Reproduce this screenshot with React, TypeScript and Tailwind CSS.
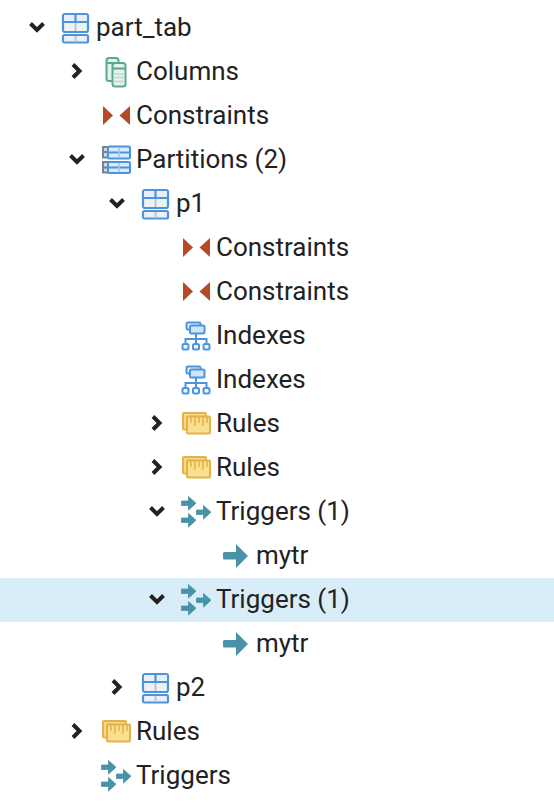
import type { ReactNode } from "react";

type IconName = "table" | "columns" | "constraints" | "partitions" | "indexes" | "rules" | "triggers" | "trigger";

type Node = {
  label: string;
  icon: IconName;
  depth: 0 | 1 | 2 | 3 | 4;
  arrow?: "open" | "closed";
  selected?: boolean;
};

const nodes: Node[] = [
  { label: "part_tab", icon: "table", depth: 0, arrow: "open" },
  { label: "Columns", icon: "columns", depth: 1, arrow: "closed" },
  { label: "Constraints", icon: "constraints", depth: 1 },
  { label: "Partitions (2)", icon: "partitions", depth: 1, arrow: "open" },
  { label: "p1", icon: "table", depth: 2, arrow: "open" },
  { label: "Constraints", icon: "constraints", depth: 3 },
  { label: "Constraints", icon: "constraints", depth: 3 },
  { label: "Indexes", icon: "indexes", depth: 3 },
  { label: "Indexes", icon: "indexes", depth: 3 },
  { label: "Rules", icon: "rules", depth: 3, arrow: "closed" },
  { label: "Rules", icon: "rules", depth: 3, arrow: "closed" },
  { label: "Triggers (1)", icon: "triggers", depth: 3, arrow: "open" },
  { label: "mytr", icon: "trigger", depth: 4 },
  { label: "Triggers (1)", icon: "triggers", depth: 3, arrow: "open", selected: true },
  { label: "mytr", icon: "trigger", depth: 4 },
  { label: "p2", icon: "table", depth: 2, arrow: "closed" },
  { label: "Rules", icon: "rules", depth: 1, arrow: "closed" },
  { label: "Triggers", icon: "triggers", depth: 1 },
];

const depthClass = ["pl-[27px]", "pl-[67px]", "pl-[107px]", "pl-[147px]", "pl-[187px]"];

const BLUE = "#4a94e0";
const TEAL = "#4a92a8";
const RUST = "#b64a24";
const GOLD = "#e3b24a";

function TableIcon() {
  return (
    <g stroke={BLUE} strokeWidth="2.2">
      <rect x="2" y="2" width="25" height="18" rx="2" fill="#eef1f3" />
      <rect x="2" y="23" width="25" height="7.5" rx="1.5" fill="#eef1f3" />
      <path d="M14.5 11V19M14.5 24V30" stroke="#c4c8cc" />
      <path d="M3 3H26V9H3Z" fill="#e6f0f8" stroke="none" />
      <path d="M2 10H27M14.5 2V10" />
    </g>
  );
}

function ColumnsIcon() {
  const green = "#5aa88e";
  return (
    <g stroke={green} strokeWidth="2" fill="#e4f2ec">
      <rect x="5.5" y="2" width="12" height="23" rx="2.5" />
      <path d="M6 7H17" />
      <rect x="11.5" y="7" width="13" height="23.5" rx="2.5" />
      <path d="M12 12.5H24" />
      <path d="M12 18H24M12 21.5H24M12 25.5H24" stroke="#b5dccb" strokeWidth="1.3" />
    </g>
  );
}

function ConstraintsIcon() {
  return (
    <g fill={RUST}>
      <path d="M2 6L12 15.5L2 25Z" />
      <path d="M29 6V25L18.5 15.5Z" />
    </g>
  );
}

function PartitionsIcon() {
  return (
    <g strokeWidth="2">
      <rect x="2" y="3" width="10" height="10.5" fill="#d4d8dc" stroke="#73849a" />
      <rect x="2" y="18" width="10" height="10.5" fill="#d4d8dc" stroke="#73849a" />
      <path d="M2 8H8M2 23.5H8" stroke="#73849a" />
      <rect x="7" y="2.5" width="22" height="12" rx="1.5" fill="#d6ebfb" stroke={BLUE} />
      <rect x="7" y="18" width="22" height="11" rx="1.5" fill="#d6ebfb" stroke={BLUE} />
      <path d="M7 8.5H29M7 23.5H29" stroke={BLUE} />
      <path d="M18 3V14M18 19V28" stroke="#b9c4cc" strokeWidth="1.5" />
    </g>
  );
}

function IndexesIcon() {
  return (
    <g stroke={BLUE} strokeWidth="2">
      <rect x="5.5" y="2.5" width="14" height="7" rx="1.5" fill="#e3eff9" />
      <rect x="9" y="5.5" width="14.5" height="8" rx="1.5" fill="#cfe5fa" />
      <path d="M15 13.5V19M4.5 24V19H25.5V24M15 19V24" fill="none" />
      <rect x="1.5" y="24" width="6" height="5.5" rx="1.5" fill="#eef5fc" />
      <rect x="12" y="24" width="6" height="5.5" rx="1.5" fill="#eef5fc" />
      <rect x="22.5" y="24" width="6" height="5.5" rx="1.5" fill="#eef5fc" />
    </g>
  );
}

function RulesIcon() {
  return (
    <g stroke={GOLD} strokeWidth="2">
      <rect x="2" y="5" width="23" height="16.5" rx="1" fill="#f5d98a" />
      <rect x="6" y="8.5" width="23" height="17" rx="1" fill="#fae08e" />
      <path d="M10 9V15M14 9V18M18 9V15M22 9V18M26 9V15" strokeWidth="1.5" fill="none" />
    </g>
  );
}

function Arrow({ x, y }: { x: number; y: number }) {
  return (
    <path
      transform={`translate(${x} ${y})`}
      fill={TEAL}
      stroke={TEAL}
      strokeWidth="0.8"
      strokeLinejoin="round"
      d="M0.500 5H7.500V0.500L15 7.250L7.500 14V9.500H0.500Z"
    />
  );
}

function TriggersIcon() {
  return (
    <g>
      <Arrow x={0} y={0} />
      <Arrow x={15} y={9} />
      <Arrow x={0} y={17} />
    </g>
  );
}

function TriggerIcon() {
  return (
    <path
      fill={TEAL}
      d="M2 13.5Q2 12 3.5 12H15V4L27 16L15 28V19.5H3.5Q2 19.5 2 18Z"
    />
  );
}

const icons: Record<IconName, ReactNode> = {
  table: <TableIcon />,
  columns: <ColumnsIcon />,
  constraints: <ConstraintsIcon />,
  partitions: <PartitionsIcon />,
  indexes: <IndexesIcon />,
  rules: <RulesIcon />,
  triggers: <TriggersIcon />,
  trigger: <TriggerIcon />,
};

function Chevron({ arrow }: { arrow?: "open" | "closed" }) {
  return (
    <span className="w-5 h-5 shrink-0">
      {arrow && (
        <svg viewBox="0 0 20 20" className="w-5 h-5" fill="none" stroke="#222222" strokeWidth="4">
          <path d={arrow === "open" ? "M3.5 6.5L10 13L16.5 6.5" : "M6 3.5L12.5 10L6 16.5"} />
        </svg>
      )}
    </span>
  );
}

function TreeRow({ node }: { node: Node }) {
  return (
    <div
      className={`flex items-center h-11 pb-[2px] ${depthClass[node.depth]} ${node.selected ? "bg-[#d9edf9]" : ""}`}
    >
      <Chevron arrow={node.arrow} />
      <svg viewBox="0 0 30 30" className="ml-[14px] w-[30px] h-[30px] shrink-0 overflow-visible">
        {icons[node.icon]}
      </svg>
      <span className="ml-[5px] text-[26px] text-[#222222] whitespace-nowrap">{node.label}</span>
    </div>
  );
}

export default function App() {
  return (
    <div className="min-h-screen bg-white pt-[6px] font-['Roboto',sans-serif]">
      {nodes.map((node, i) => (
        <TreeRow key={i} node={node} />
      ))}
    </div>
  );
}
